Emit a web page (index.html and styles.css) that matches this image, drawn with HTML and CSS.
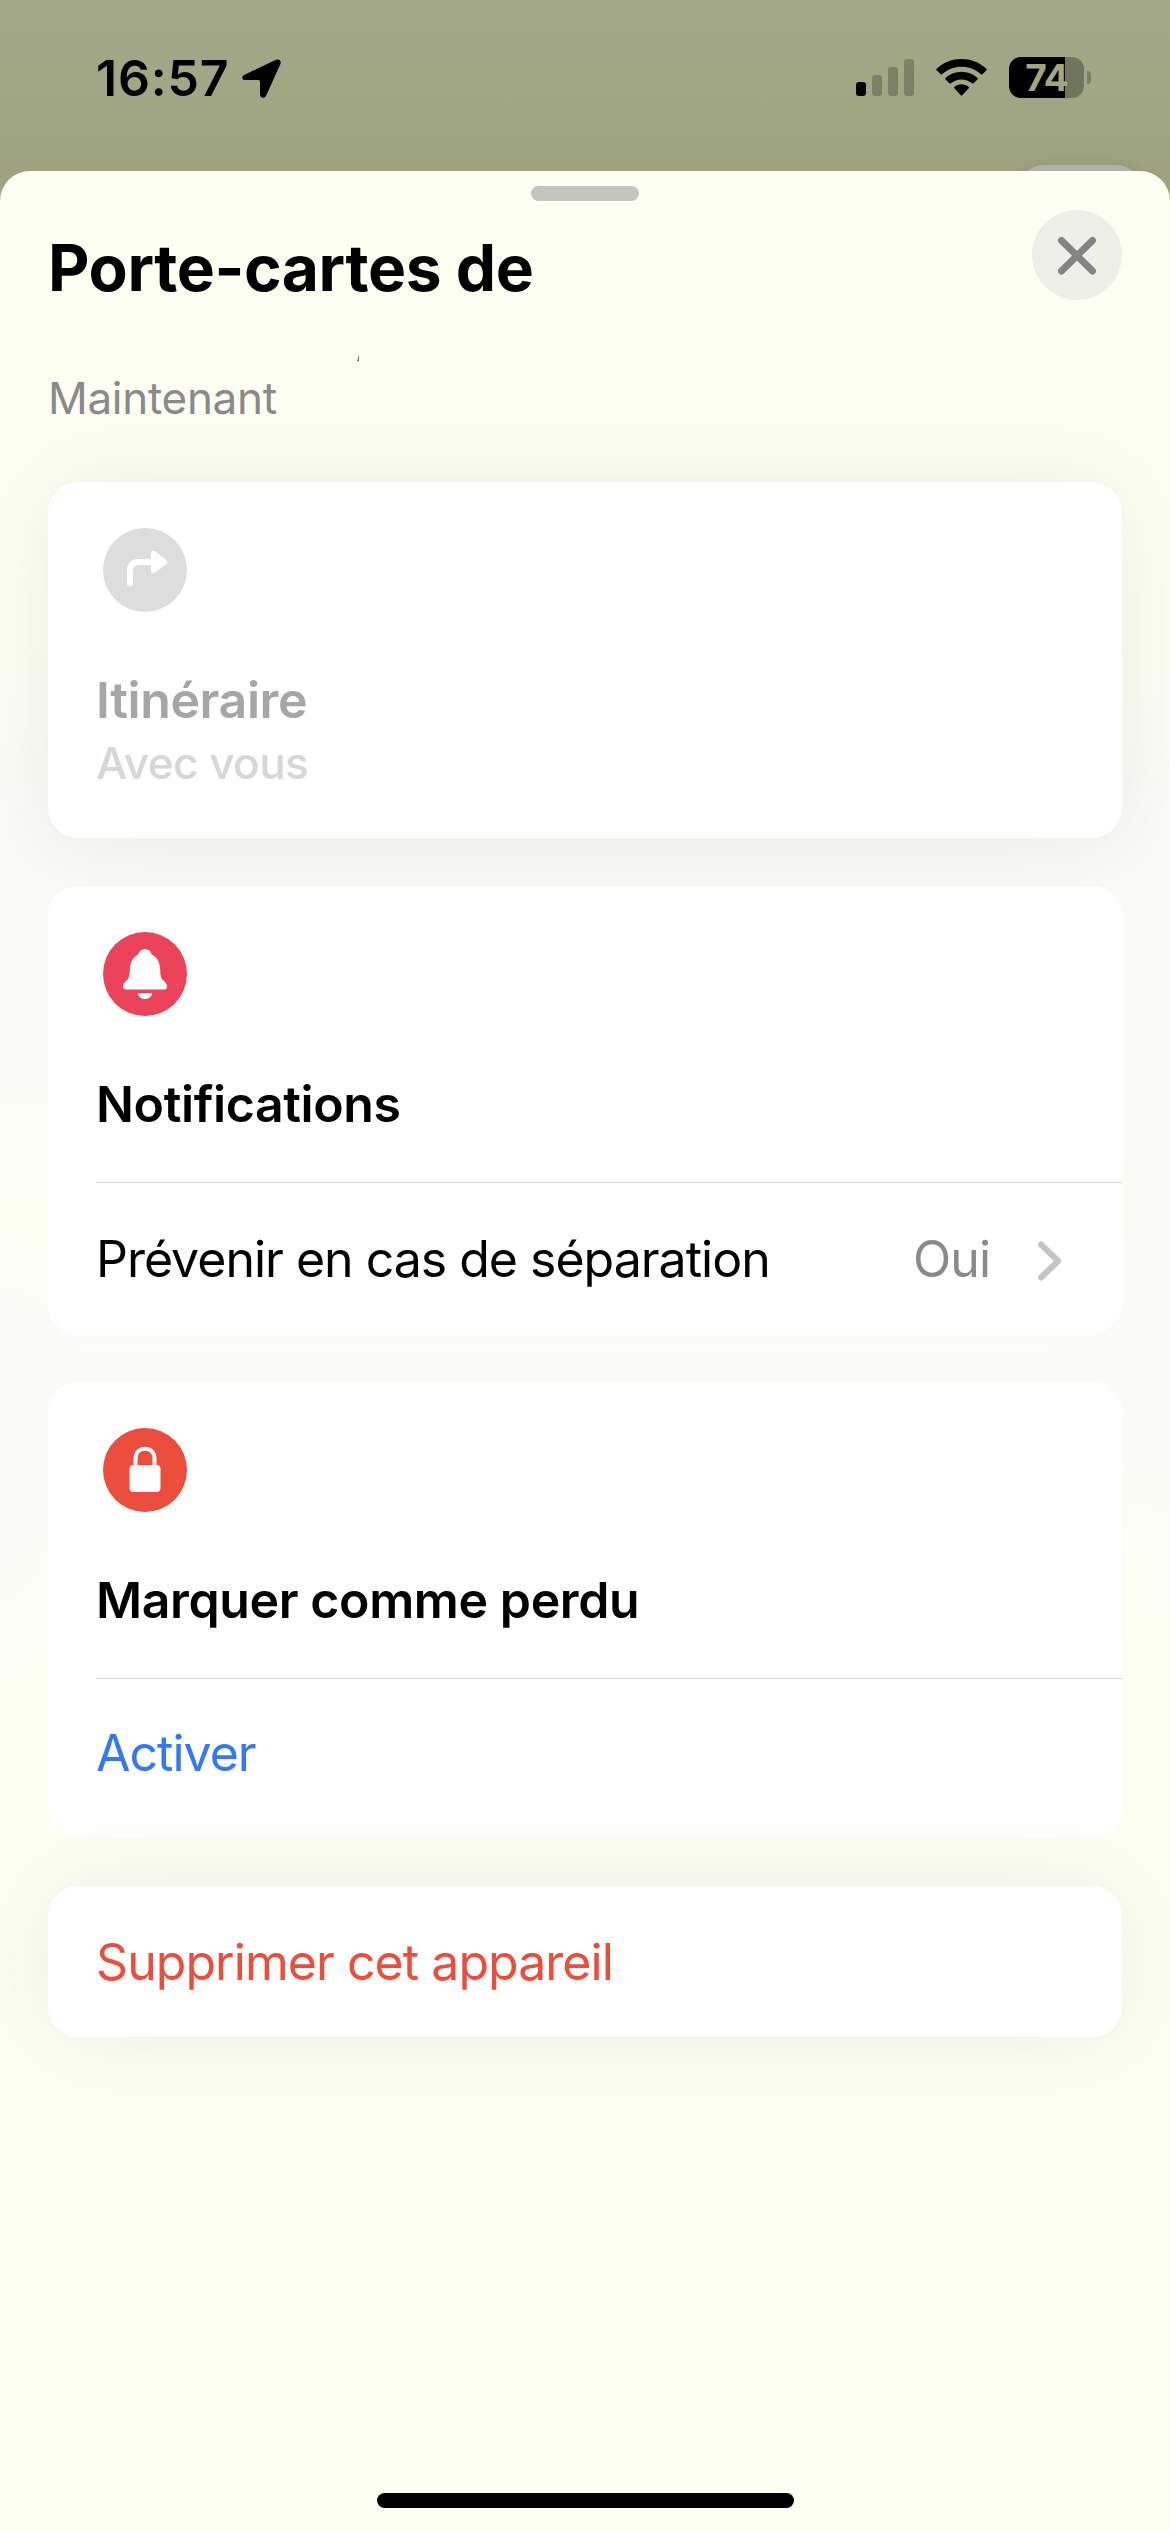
FILE: index.html
```html
<!DOCTYPE html>
<html lang="fr">
<head>
<meta charset="utf-8">
<title>Porte-cartes</title>
<link rel="stylesheet" href="styles.css">
</head>
<body>
<div class="phone">
  <header class="status">
    <span class="time">16:57</span>
    <svg class="location" viewBox="0 0 39 39"><path d="M3 15.500 33.500.9C37-.5 39.500 1.500 38.400 5L24.200 36.500c-1.400 3.300-6.200 2.700-6.200-1.200V22.500q0-1.500-1.500-1.500H3.700C-.5 21-1 17.200 3 15.500z"/></svg>
    <div class="indicators">
      <svg class="signal" viewBox="0 0 58 37"><rect y="23" width="10" height="14" rx="3"/><g opacity=".22"><rect x="16" y="16" width="10" height="21" rx="3"/><rect x="32" y="8" width="10" height="29" rx="3"/><rect x="48" width="10" height="37" rx="3"/></g></svg>
      <svg class="wifi" viewBox="0 0 51 37"><path d="M.6 9.800C14.500-3.200 36.500-3.200 50.400 9.800q.7.700 0 1.400l-4 4q-.7.600-1.400 0C34 5.300 17 5.300 6 15.200q-.7.600-1.400 0l-4-4q-.7-.7 0-1.400zM9.400 18.900c9.300-8.200 22.900-8.200 32.200 0q.6.600 0 1.300l-4 4q-.7.600-1.400 0c-6.200-5.100-15.200-5.100-21.400 0q-.7.600-1.400 0l-4-4q-.6-.7 0-1.300zM18.300 27.900c4.300-3.600 10.100-3.600 14.400 0q.7.700 0 1.300L26.200 36.300q-.7.700-1.400 0L18.300 29.200q-.7-.6 0-1.300z"/></svg>
      <div class="battery"><span class="battery-body">74</span><span class="battery-cap"></span></div>
    </div>
    <div class="map-button"></div>
  </header>
  <main class="sheet">
    <div class="grabber"></div>
    <div class="heading">
      <h1>Porte-cartes de</h1>
      <button class="close" aria-label="Fermer"><svg viewBox="0 0 90 90"><path d="M29.500 30.500l31 30.500M60.500 30.500l-31 30.500"/></svg></button>
    </div>
    <svg class="tick" viewBox="0 0 2 6"><path d="M1.500 0v5M.5 3.500v2"/></svg>
    <p class="when">Maintenant</p>
    <section class="cards">
      <article class="card raised route">
        <svg class="icon" viewBox="0 0 84 84"><circle cx="42" cy="42" r="42" fill="#ddd"/><path d="M27 55.300V43q0-9 9-9h14" fill="none" stroke="#fff" stroke-width="6" stroke-linecap="round"/><path d="M48 25.500c0-2.700 2.300-3.500 4.300-2L63 31.700q2.400 2.300 0 4.600l-10.700 8.300c-2 1.600-4.300.8-4.300-1.800z" fill="#fff"/></svg>
        <h2>Itinéraire</h2>
        <p class="sub">Avec vous</p>
      </article>
      <article class="card">
        <svg class="icon" viewBox="0 0 84 84"><circle cx="42" cy="42" r="42" fill="#eb445a"/><path d="M42 17c3.600 0 5.700 2.200 6.500 5.200C54.500 25 57 31 57.200 38c.2 5 .5 8.300 3.300 10.600 2 1.900 3.500 3.700 3.500 5.900q0 3-3 3H23q-3 0-3-3c0-2.200 1.500-4 3.500-5.900 2.800-2.300 3.100-5.600 3.300-10.600.2-7 2.700-13 8.700-15.800.8-3 2.900-5.200 6.500-5.200zM35 61h14c0 3.500-3 6-7 6s-7-2.500-7-6z" fill="#fff"/></svg>
        <h2>Notifications</h2>
        <div class="row"><span>Prévenir en cas de séparation</span><span class="value">Oui</span><svg class="chevron" viewBox="0 0 24 40"><path d="M3 3.500 20.200 20 3 36.500"/></svg></div>
      </article>
      <article class="card">
        <svg class="icon" viewBox="0 0 84 84"><circle cx="42" cy="42" r="42" fill="#eb4e3d"/><rect x="26.500" y="37" width="31" height="27" rx="4" fill="#fff"/><path d="M32.500 39v-8c0-6.500 4-10.200 9.500-10.200s9.500 3.700 9.500 10.200v8" fill="none" stroke="#fff" stroke-width="4"/></svg>
        <h2>Marquer comme perdu</h2>
        <div class="row tall"><span class="link">Activer</span></div>
      </article>
      <article class="card raised remove"><span>Supprimer cet appareil</span></article>
    </section>
    <div class="home"></div>
  </main>
</div>
</body>
</html>
```
FILE: styles.css
```css
* { box-sizing: border-box; margin: 0; padding: 0; }
body { background: #a1a785; font-family: Inter, "Liberation Sans", sans-serif; color: #000; }
svg { display: block; flex: none; }
.phone { width: 1170px; height: 2532px; overflow: hidden; display: flex; flex-direction: column; background: linear-gradient(#a2a888, #a1a785 80px, #9ea281 171px, #a1a785 220px); }
.status { position: relative; height: 171px; padding: 57px 79px 0 96px; display: flex; align-items: flex-start; }
.time { width: 146px; font-size: 50px; font-weight: 600; line-height: 42px; letter-spacing: 0.8px; white-space: nowrap; }
.location { width: 39px; height: 39px; margin-top: 2px; }
.indicators { margin-left: auto; display: flex; align-items: flex-start; }
.signal { width: 58px; height: 37px; margin: 2px 22px 0 0; }
.wifi { width: 51px; height: 37px; margin: 2px 22px 0 0; }
.battery { display: flex; align-items: center; gap: 3px; }
.battery-body { width: 75px; height: 41px; border-radius: 12px; background: linear-gradient(90deg, #000 56px, #70755e 56px); color: #a1a785; font-size: 37px; font-weight: 700; line-height: 42px; text-align: center; letter-spacing: -1px; }
.battery-cap { width: 4px; height: 13px; border-radius: 0 4px 4px 0; background: #7b7f66; }
.map-button { position: absolute; left: 1018px; top: 165px; width: 124px; height: 60px; border-radius: 26px; background: #b0b1aa; box-shadow: 0 0 14px rgba(70, 75, 50, .12); }
.sheet { position: relative; height: 2361px; border-radius: 30px 30px 0 0; padding: 15px 48px 24px; display: flex; flex-direction: column; background:
  radial-gradient(ellipse 130px 330px at 1170px 1090px, #fafaf8, #fafaf800),
  radial-gradient(ellipse 90px 260px at 0 1290px, #fafaf9, #fafaf900),
  linear-gradient(#fdfff2 0, #fdfff2 470px, #fafaf9 680px, #fafaf9 840px, #fdfff2 1060px, #fbfbf8 1190px, #fdfff2 1500px, #fdfff2); }
.grabber { width: 108px; height: 15px; border-radius: 8px; background: #c4c5be; align-self: center; }
.heading { display: flex; justify-content: space-between; padding-top: 9px; height: 150px; }
h1 { padding-top: 17px; font-size: 64px; line-height: 82px; font-weight: 700; letter-spacing: -0.4px; white-space: nowrap; }
.close { width: 90px; height: 90px; border: 0; border-radius: 50%; background: #eeefe7; }
.close path { fill: none; stroke: #848484; stroke-width: 7; stroke-linecap: round; }
.tick { width: 2px; height: 6px; margin: 5px 0 6px 309px; }
.tick path { stroke: #777; fill: none; }
.when { font-size: 44px; line-height: 60px; color: #8a8a8a; height: 114px; letter-spacing: -0.3px; }
.cards { display: flex; flex-direction: column; gap: 48px; }
.card { border-radius: 30px; background: #fff; padding: 46px 0 0 48px; }
.raised { box-shadow: 0 0 90px rgba(50, 60, 60, .09); }
.icon { width: 84px; height: 84px; margin: 0 0 58px 7px; }
h2 { font-size: 50px; line-height: 60px; font-weight: 600; letter-spacing: -0.38px; white-space: nowrap; }
.route { height: 356px; }
.route h2 { color: #a6a6a6; }
.sub { font-size: 44px; line-height: 60px; margin-top: 3px; color: #d7d7d7; font-weight: 500; letter-spacing: -0.5px; }
.row { margin-top: 48px; border-top: 1px solid #d9d9d9; height: 152px; padding: 46px 60px 0 0; display: flex; align-items: flex-start; font-size: 50px; line-height: 60px; letter-spacing: -1px; white-space: nowrap; }
.tall { height: 160px; padding-top: 44px; }
.value { margin-left: auto; color: #8a8a8c; }
.chevron { width: 24px; height: 40px; margin: 12px 0 0 48px; }
.chevron path { fill: none; stroke: #c5c5c5; stroke-width: 6; stroke-linecap: round; stroke-linejoin: round; }
.link { color: #3478f6; }
.remove { height: 151px; padding-top: 46px; font-size: 50px; line-height: 60px; color: #eb4e3d; letter-spacing: -0.95px; }
.home { width: 417px; height: 15px; border-radius: 8px; background: #000; margin: auto auto 0; }
```
